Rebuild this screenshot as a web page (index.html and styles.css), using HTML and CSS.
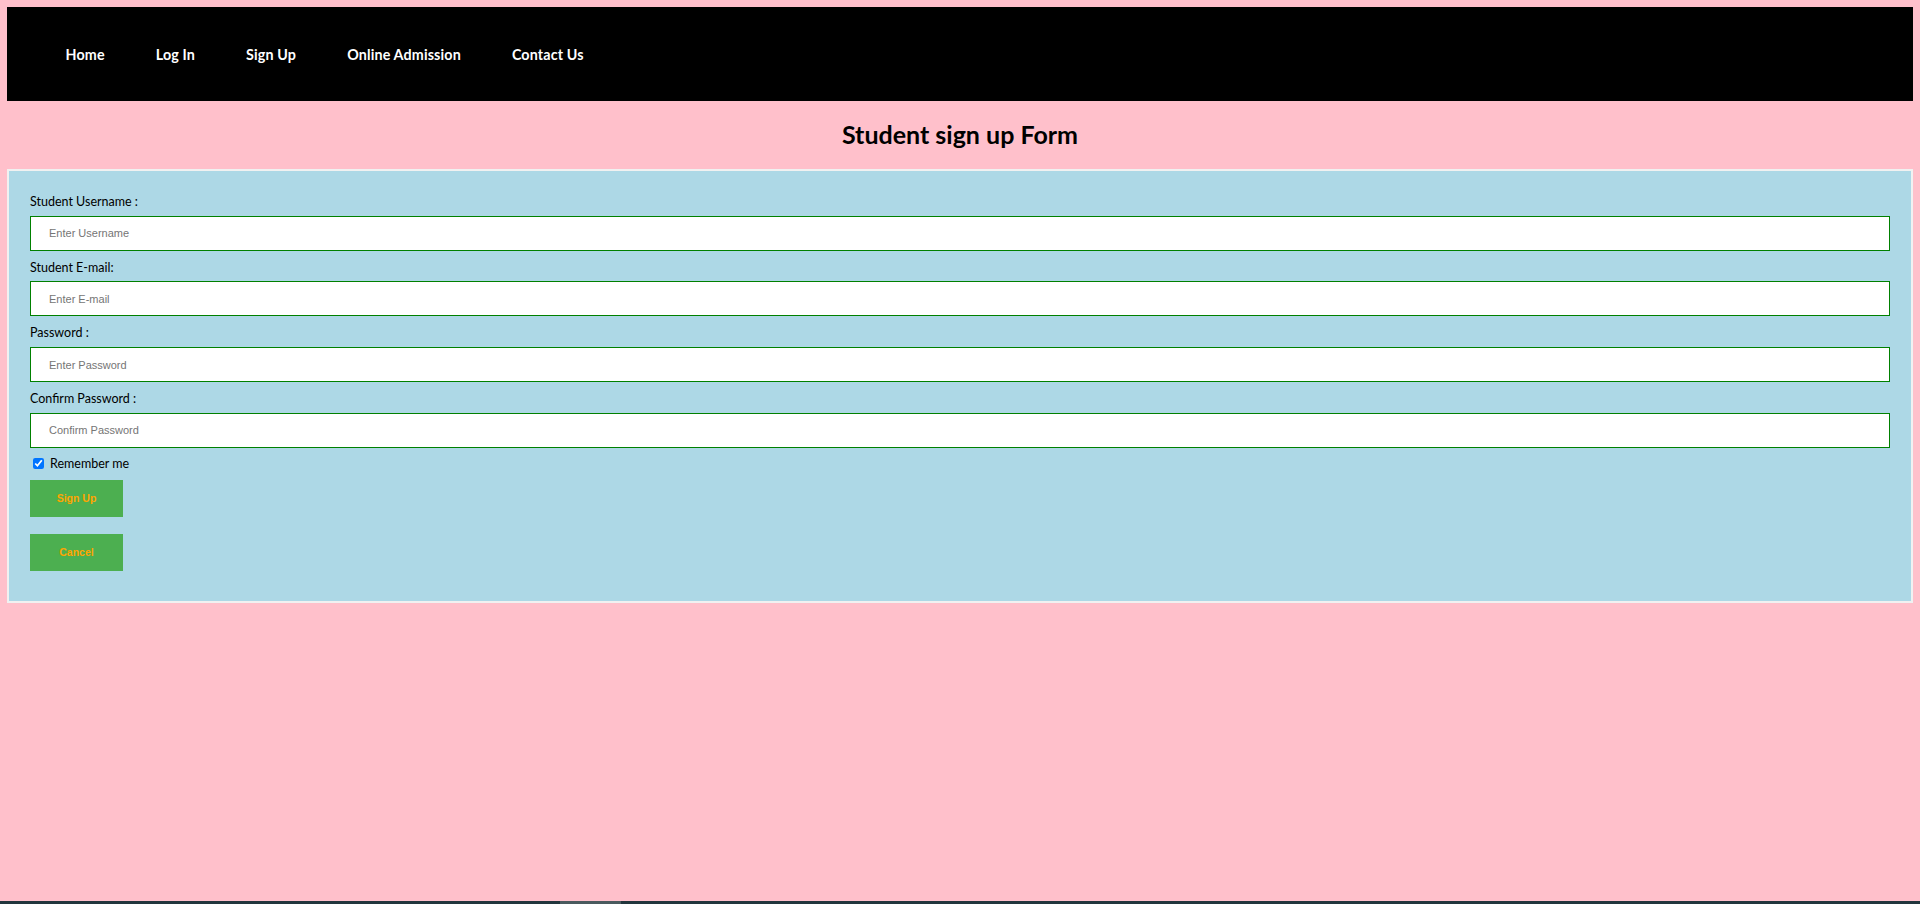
FILE: index.html
```html
<!DOCTYPE html>
<html lang="en">
<head>
<meta charset="utf-8">
<title>Student sign up Form</title>
<link rel="stylesheet" href="styles.css">
</head>
<body>
<nav class="topnav">
  <a class="nav-link" href="#">Home</a>
  <a class="nav-link" href="#">Log In</a>
  <a class="nav-link" href="#">Sign Up</a>
  <a class="nav-link" href="#">Online Admission</a>
  <a class="nav-link" href="#">Contact Us</a>
</nav>
<h2 class="page-title">Student sign up Form</h2>
<form class="signup-box">
  <label class="field-label" for="uname">Student Username :</label>
  <input class="field-input" id="uname" type="text" placeholder="Enter Username">
  <label class="field-label" for="email">Student E-mail:</label>
  <input class="field-input" id="email" type="text" placeholder="Enter E-mail">
  <label class="field-label" for="pw">Password :</label>
  <input class="field-input" id="pw" type="password" placeholder="Enter Password">
  <label class="field-label" for="pw2">Confirm Password :</label>
  <input class="field-input" id="pw2" type="password" placeholder="Confirm Password">
  <label class="remember"><input class="remember-box" type="checkbox" checked> Remember me</label>
  <button class="btn btn-signup" type="button">Sign Up</button>
  <button class="btn btn-cancel" type="button">Cancel</button>
</form>
<div class="frame-bar"><span class="frame-thumb"></span></div>
</body>
</html>
```
FILE: styles.css
```css
html, body {
  height: 100%;
}
body {
  margin: 7px;
  background: #ffc0cb;
  font-family: Lato, "Open Sans", sans-serif;
  color: #000;
}
.topnav {
  height: 94px;
  background: #000;
  display: flex;
  align-items: center;
  padding-left: 33px;
  box-sizing: border-box;
}
.nav-link {
  color: #fff;
  text-decoration: none;
  font-weight: 700;
  font-size: 14.3px;
  letter-spacing: 0.15px;
  padding: 0 25.5px;
  margin-top: 1px;
}
.page-title {
  margin: 0;
  height: 68px;
  display: flex;
  align-items: center;
  justify-content: center;
  font-size: 25px;
  font-weight: 700;
  padding-bottom: 2px;
  box-sizing: border-box;
}
.signup-box {
  display: flex;
  flex-direction: column;
  align-items: flex-start;
  border: 2px solid #f1f1f1;
  background: #add8e6;
  padding: 22px 21px 30px;
}
.field-label {
  font-size: 12.5px;
  line-height: 11.67px;
  padding-top: 3px;
  margin: 0;
}
.field-input {
  width: 100%;
  height: 35px;
  box-sizing: border-box;
  margin: 8px 0;
  border: 1.5px solid #008000;
  background: #fff;
  padding: 0 18px;
  font-family: "Liberation Sans", Arial, sans-serif;
  font-size: 11px;
  outline: none;
}
.field-input::placeholder {
  color: #757575;
}
.remember {
  display: flex;
  align-items: center;
  font-size: 12.5px;
  line-height: 16px;
  height: 16px;
}
.remember-box {
  width: 11px;
  height: 11px;
  margin: 0 6px 0 3px;
  accent-color: #0075ff;
}
.btn {
  width: 93px;
  height: 37px;
  border: none;
  background: #4caf50;
  color: #ffa500;
  font-family: "Liberation Sans", Arial, sans-serif;
  font-weight: 700;
  font-size: 10.5px;
  padding: 0;
}
.btn-signup {
  margin-top: 8px;
}
.btn-cancel {
  margin-top: 17px;
}
.frame-bar {
  position: fixed;
  left: 0;
  right: 0;
  bottom: 0;
  height: 3px;
  background: #22363d;
}
.frame-thumb {
  position: absolute;
  left: 560px;
  width: 61px;
  top: 0;
  bottom: 0;
  background: #4a5a5e;
}
```
